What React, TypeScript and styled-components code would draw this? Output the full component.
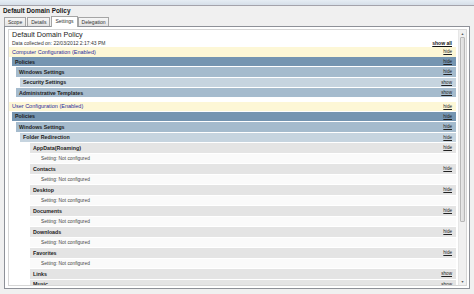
import styled, { createGlobalStyle } from 'styled-components';

const GlobalStyle = createGlobalStyle`
  html, body {
    margin: 0;
    padding: 0;
    background: #f0f0f0;
    font-family: "Liberation Sans", Arial, sans-serif;
  }
`;

type Tone = 'config' | 'dark' | 'mid' | 'light' | 'item' | 'value';

interface RowType {
  label: string;
  tone: Tone;
  indent: number;
  action?: string;
}

// indent is counted from the left edge of the report area
const computerRows: RowType[] = [
  { label: 'Policies', tone: 'dark', indent: 3, action: 'hide' },
  { label: 'Windows Settings', tone: 'mid', indent: 7, action: 'hide' },
  { label: 'Security Settings', tone: 'light', indent: 11, action: 'show' },
  { label: 'Administrative Templates', tone: 'mid', indent: 7, action: 'show' },
];

const folders = ['AppData(Roaming)', 'Contacts', 'Desktop', 'Documents', 'Downloads', 'Favorites'];

const userRows: RowType[] = [
  { label: 'Policies', tone: 'dark', indent: 3, action: 'hide' },
  { label: 'Windows Settings', tone: 'mid', indent: 7, action: 'hide' },
  { label: 'Folder Redirection', tone: 'light', indent: 11, action: 'hide' },
  ...folders.flatMap((name): RowType[] => [
    { label: name, tone: 'item', indent: 21, action: 'hide' },
    { label: 'Setting: Not configured', tone: 'value', indent: 21 },
  ]),
  { label: 'Links', tone: 'item', indent: 21, action: 'show' },
  { label: 'Music', tone: 'item', indent: 21, action: 'show' },
];

const tabs = ['Scope', 'Details', 'Settings', 'Delegation'];

const Band = ({ label, tone, indent, action, height }: RowType & { height: number }) => (
  <_Band $tone={tone} $indent={indent} $height={height}>
    <_BandLabel $tone={tone}>{label}</_BandLabel>
    {action && <_Action>{action}</_Action>}
  </_Band>
);

export default function App() {
  return (
    <>
      <GlobalStyle />
      <_Window>
        <_TopStrip />
        <_Title>Default Domain Policy</_Title>
        <_Tabs>
          {tabs.map((tab) => (
            <_Tab key={tab} $active={tab === 'Settings'}>
              {tab}
            </_Tab>
          ))}
        </_Tabs>
        <_Panel>
          <_Browser>
            <_Report>
              <_Heading>Default Domain Policy</_Heading>
              <_MetaRow>
                <span>Data collected on: 22/03/2012 2:17:43 PM</span>
                <_ShowAll>show all</_ShowAll>
              </_MetaRow>
              <Band label="Computer Configuration (Enabled)" tone="config" indent={0} action="hide" height={9.5} />
              <_Group>
                {computerRows.map((row, idx) => (
                  <Band key={idx} {...row} height={9.3} />
                ))}
              </_Group>
              <_Spacer />
              <Band label="User Configuration (Enabled)" tone="config" indent={0} action="hide" height={9.5} />
              <_Group>
                {userRows.map((row, idx) => (
                  <Band key={idx} {...row} height={9.5} />
                ))}
              </_Group>
            </_Report>
            <_ScrollBar>
              <_Arrow>▲</_Arrow>
              <_Track>
                <_Thumb />
              </_Track>
              <_Arrow>▼</_Arrow>
            </_ScrollBar>
          </_Browser>
        </_Panel>
      </_Window>
    </>
  );
}

const bandColor: Record<Tone, string> = {
  config: '#fdf7d6',
  dark: '#7595b1',
  mid: '#a5bbcd',
  light: '#c6d4df',
  item: '#e4e4e4',
  value: '#fafafa',
};

const _Window = styled.div`
  width: 474px;
  height: 294px;
  overflow: hidden;
  display: flex;
  flex-direction: column;
`;

const _TopStrip = styled.div`
  height: 5px;
  background: linear-gradient(#e6edf4, #d6dfe9);
  border-bottom: 1px solid #a4a3ab;
`;

const _Title = styled.div`
  font-weight: bold;
  font-size: 6.4px;
  color: #1a1a1a;
  padding: 0 3px;
  height: 10px;
  line-height: 10px;
`;

const _Tabs = styled.div`
  display: flex;
  align-items: flex-end;
  padding-left: 4px;
  height: 10px;
`;

const _Tab = styled.div<{ $active: boolean }>`
  font-size: 5px;
  color: #333;
  border: 1px solid #a5a5a5;
  border-bottom: none;
  background: ${({ $active }) => ($active ? '#ffffff' : 'linear-gradient(#f6f6f6, #e4e4e4)')};
  height: ${({ $active }) => ($active ? '10px' : '8px')};
  line-height: ${({ $active }) => ($active ? '9px' : '8px')};
  padding: 0 3px;
  margin-right: ${({ $active }) => ($active ? '0' : '1px')};
  margin-bottom: ${({ $active }) => ($active ? '-1px' : '0')};
  position: relative;
  z-index: ${({ $active }) => ($active ? 1 : 0)};
`;

const _Panel = styled.div`
  margin: 0 4px;
  height: 263px;
  border: 1px solid #8e9198;
  background: #ffffff;
  padding: 2px 2px 2px 3px;
  box-sizing: border-box;
`;

const _Browser = styled.div`
  display: flex;
  height: 100%;
  border: 1px solid #d6d6d6;
  box-sizing: border-box;
`;

const _Report = styled.div`
  flex: 1;
  overflow: hidden;
  padding: 0 2px 0 0;
`;

const _Heading = styled.div`
  font-size: 7.2px;
  color: #222;
  padding-left: 3px;
  height: 9px;
  line-height: 9px;
`;

const _MetaRow = styled.div`
  display: flex;
  justify-content: space-between;
  align-items: flex-end;
  font-size: 5px;
  color: #333;
  padding: 0 4px 0 3px;
  height: 8px;
  line-height: 8px;
`;

const _ShowAll = styled.span`
  font-weight: bold;
  text-decoration: underline;
  font-size: 5px;
  color: #111;
`;

const _Group = styled.div`
  display: flex;
  flex-direction: column;
  padding-top: 0.5px;
  gap: 1px;
`;

const _Spacer = styled.div`
  height: 4.5px;
`;

const _Band = styled.div<{ $tone: Tone; $indent: number; $height: number }>`
  display: flex;
  align-items: center;
  justify-content: space-between;
  flex-shrink: 0;
  height: ${({ $height }) => $height}px;
  margin-left: ${({ $indent }) => $indent}px;
  background: ${({ $tone }) => bandColor[$tone]};
  padding: 0 4px 0 ${({ $tone }) => ($tone === 'value' ? '11px' : '3px')};
  box-sizing: border-box;
`;

const _BandLabel = styled.span<{ $tone: Tone }>`
  font-size: ${({ $tone }) => ($tone === 'config' ? '5.5px' : $tone === 'value' ? '4.8px' : '5.3px')};
  font-weight: ${({ $tone }) => ($tone === 'config' || $tone === 'value' ? 'normal' : 'bold')};
  color: ${({ $tone }) => ($tone === 'config' ? '#2a2a9a' : $tone === 'value' ? '#444' : '#1a1a1a')};
  white-space: nowrap;
`;

const _Action = styled.span`
  font-size: 4.6px;
  color: #222;
  text-decoration: underline;
`;

const _ScrollBar = styled.div`
  width: 7px;
  display: flex;
  flex-direction: column;
  background: #f0f0f0;
  border-left: 1px solid #e6e6e6;
`;

const _Arrow = styled.div`
  height: 7px;
  font-size: 3.5px;
  color: #555;
  display: flex;
  align-items: center;
  justify-content: center;
`;

const _Track = styled.div`
  flex: 1;
  padding: 0 1px;
`;

const _Thumb = styled.div`
  height: 185px;
  background: linear-gradient(90deg, #e8e8e8, #dcdcdc);
  border: 1px solid #b8b8b8;
  border-radius: 1px;
  box-sizing: border-box;
`;
